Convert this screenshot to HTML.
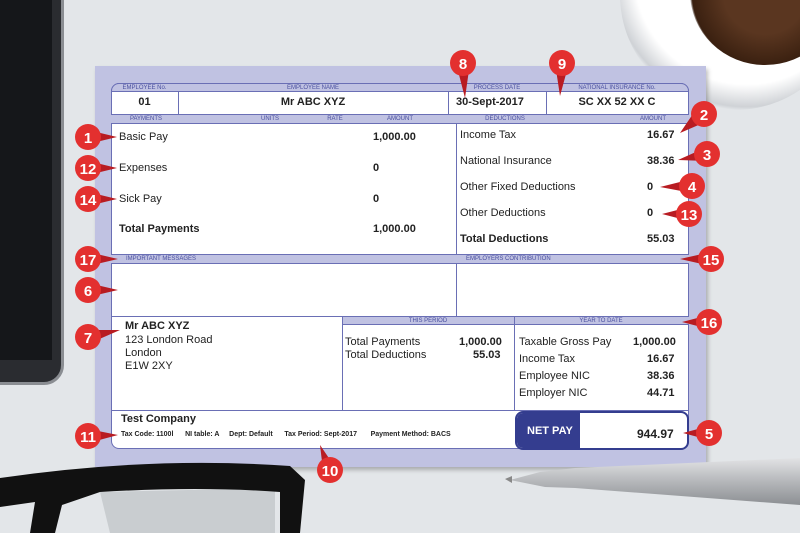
<!DOCTYPE html>
<html><head><meta charset="utf-8"><style>
*{margin:0;padding:0;box-sizing:border-box}
body{width:800px;height:533px;overflow:hidden;background:#e3e6e9;font-family:"Liberation Sans",sans-serif;position:relative}
.a{position:absolute}
.lbl{position:absolute;font-size:6px;color:#4a50a0;text-align:center;line-height:8px}
.t{position:absolute;font-size:11px;color:#222;white-space:nowrap}
.b{font-weight:bold}
.band{position:absolute;background:#c0c2e2;border-top:1px solid #6a6fb5;border-bottom:1px solid #6a6fb5}
.vl{position:absolute;width:1px;background:#6a6fb5}
</style></head><body>
<!-- phone -->
<div class="a" style="left:-30px;top:-20px;width:94px;height:405px;background:#2a2c30;border-radius:20px;border:3px solid #8a8d92"></div>
<div class="a" style="left:-30px;top:0;width:82px;height:360px;background:#15171a"></div>
<!-- coffee -->
<div class="a" style="left:620px;top:-120px;width:230px;height:230px;border-radius:50%;background:radial-gradient(circle at 55% 40%,#fff 60%,#cfd2d6 72%,#e3e6e9 74%)"></div>
<div class="a" style="left:690px;top:-80px;width:150px;height:145px;border-radius:50%;background:radial-gradient(circle,#5a3620 40%,#3a2010 70%,#d8d8d8 72%,#f5f5f5 78%)"></div>
<!-- card -->
<div class="a" style="left:95px;top:66px;width:611px;height:401px;background:#c0c2e2;box-shadow:2px 3px 4px rgba(0,0,0,.25)"></div>
<div class="a" style="left:111px;top:83px;width:578px;height:366px;background:#fff;border:1px solid #6a6fb5;border-radius:8px"></div>
<div class="band" style="left:111px;top:83px;width:578px;height:9px;border-radius:8px 8px 0 0;border-left:1px solid #6a6fb5;border-right:1px solid #6a6fb5"></div>
<div class="lbl" style="left:111px;top:84px;width:67px">EMPLOYEE No.</div>
<div class="lbl" style="left:178px;top:84px;width:270px">EMPLOYEE NAME</div>
<div class="lbl" style="left:448px;top:84px;width:98px">PROCESS DATE</div>
<div class="lbl" style="left:546px;top:84px;width:142px">NATIONAL INSURANCE No.</div>
<div class="vl" style="left:178px;top:92px;height:22px"></div>
<div class="vl" style="left:448px;top:92px;height:22px"></div>
<div class="vl" style="left:546px;top:92px;height:22px"></div>
<div class="t b" style="left:111px;top:96px;width:67px;text-align:center">01</div>
<div class="t b" style="left:178px;top:96px;width:270px;text-align:center">Mr ABC XYZ</div>
<div class="t b" style="left:456px;top:96px">30-Sept-2017</div>
<div class="t b" style="left:546px;top:96px;width:142px;text-align:center">SC XX 52 XX C</div>
<div class="band" style="left:111px;top:114px;width:578px;height:10px"></div>
<div class="lbl" style="left:116px;top:115px;width:60px">PAYMENTS</div>
<div class="lbl" style="left:250px;top:115px;width:40px">UNITS</div>
<div class="lbl" style="left:315px;top:115px;width:40px">RATE</div>
<div class="lbl" style="left:375px;top:115px;width:50px">AMOUNT</div>
<div class="lbl" style="left:470px;top:115px;width:70px">DEDUCTIONS</div>
<div class="lbl" style="left:628px;top:115px;width:50px">AMOUNT</div>
<div class="vl" style="left:456px;top:124px;height:192px"></div>
<div class="t" style="left:119px;top:131px">Basic Pay</div>
<div class="t b" style="left:373px;top:131px">1,000.00</div>
<div class="t" style="left:119px;top:162px">Expenses</div>
<div class="t b" style="left:373px;top:162px">0</div>
<div class="t" style="left:119px;top:193px">Sick Pay</div>
<div class="t b" style="left:373px;top:193px">0</div>
<div class="t b" style="left:119px;top:223px">Total Payments</div>
<div class="t b" style="left:373px;top:223px">1,000.00</div>
<div class="t" style="left:460px;top:129px">Income Tax</div>
<div class="t b" style="left:647px;top:129px">16.67</div>
<div class="t" style="left:460px;top:155px">National Insurance</div>
<div class="t b" style="left:647px;top:155px">38.36</div>
<div class="t" style="left:460px;top:181px">Other Fixed Deductions</div>
<div class="t b" style="left:647px;top:181px">0</div>
<div class="t" style="left:460px;top:207px">Other Deductions</div>
<div class="t b" style="left:647px;top:207px">0</div>
<div class="t b" style="left:460px;top:233px">Total Deductions</div>
<div class="t b" style="left:647px;top:233px">55.03</div>
<div class="band" style="left:111px;top:254px;width:578px;height:10px"></div>
<div class="lbl" style="left:126px;top:255px">IMPORTANT MESSAGES</div>
<div class="lbl" style="left:466px;top:255px">EMPLOYERS CONTRIBUTION</div>
<div class="a" style="left:111px;top:316px;width:578px;height:1px;background:#6a6fb5"></div>
<div class="band" style="left:342px;top:316px;width:347px;height:9px"></div>
<div class="lbl" style="left:342px;top:317px;width:172px">THIS PERIOD</div>
<div class="lbl" style="left:514px;top:317px;width:174px">YEAR TO DATE</div>
<div class="vl" style="left:342px;top:316px;height:94px"></div>
<div class="vl" style="left:514px;top:316px;height:94px"></div>
<div class="a" style="left:111px;top:410px;width:578px;height:1px;background:#6a6fb5"></div>
<div class="t b" style="left:125px;top:320px">Mr ABC XYZ</div>
<div class="t" style="left:125px;top:334px">123 London Road</div>
<div class="t" style="left:125px;top:347px">London</div>
<div class="t" style="left:125px;top:360px">E1W 2XY</div>
<div class="t" style="left:345px;top:336px">Total Payments</div>
<div class="t b" style="left:459px;top:336px">1,000.00</div>
<div class="t" style="left:345px;top:349px">Total Deductions</div>
<div class="t b" style="left:473px;top:349px">55.03</div>
<div class="t" style="left:519px;top:336px">Taxable Gross Pay</div>
<div class="t b" style="left:633px;top:336px">1,000.00</div>
<div class="t" style="left:519px;top:353px">Income Tax</div>
<div class="t b" style="left:647px;top:353px">16.67</div>
<div class="t" style="left:519px;top:370px">Employee NIC</div>
<div class="t b" style="left:647px;top:370px">38.36</div>
<div class="t" style="left:519px;top:387px">Employer NIC</div>
<div class="t b" style="left:647px;top:387px">44.71</div>
<div class="t b" style="left:121px;top:413px">Test Company</div>
<div class="t b" style="left:121px;top:431px;font-size:7px">Tax Code: 1100l&nbsp;&nbsp;&nbsp;&nbsp;&nbsp;&nbsp;NI table: A&nbsp;&nbsp;&nbsp;&nbsp;&nbsp;Dept: Default&nbsp;&nbsp;&nbsp;&nbsp;&nbsp;&nbsp;Tax Period: Sept-2017&nbsp;&nbsp;&nbsp;&nbsp;&nbsp;&nbsp;&nbsp;Payment Method: BACS</div>
<div class="a" style="left:515px;top:411px;width:174px;height:39px;border:2px solid #343d8f;border-radius:8px;background:#fff;overflow:hidden">
<div class="a" style="left:0;top:0;width:63px;height:37px;background:#343d8f"></div>
<div class="t b" style="left:10px;top:12px;color:#fff;font-size:11px">NET PAY</div>
<div class="t b" style="left:120px;top:14px;font-size:12px">944.97</div></div>
<!-- glasses & pen -->
<svg class="a" style="left:0;top:0" width="800" height="533">
<defs><linearGradient id="pg" x1="0" y1="0" x2="0" y2="1"><stop offset="0" stop-color="#e2e3e5"/><stop offset=".5" stop-color="#b5b7ba"/><stop offset="1" stop-color="#8c8f93"/></linearGradient></defs>
<path d="M100 492 L275 488 L275 533 L110 533Z" fill="#b8bcc0" opacity=".6"/>
<path d="M0 478 Q150 456 290 466 L305 480 L300 533 L280 533 L280 492 Q200 486 100 492 L62 505 L55 533 L30 533 L35 502 L0 507Z" fill="#111"/>
<path d="M510 480 L540 472 L575 468 L800 458 L800 505 L575 488 L545 487Z" fill="url(#pg)"/>
<path d="M505 479 L512 476 L512 483Z" fill="#888"/>
</svg>
<!-- markers -->
<svg class="a" style="left:0;top:0" width="800" height="533" font-family="Liberation Sans" font-weight="bold" font-size="15" fill="#fff" text-anchor="middle">
<g fill="#b81c22">
<polygon points="88,130 88,144 117,137"/><polygon points="88,161 88,175 117,168"/><polygon points="88,192 88,206 117,199"/>
<polygon points="88,252 88,266 118,259"/><polygon points="88,283 88,297 118,290"/><polygon points="88,330 88,344 120,330"/>
<polygon points="88,429 88,443 118,435"/><polygon points="456,63 470,63 465,98"/><polygon points="555,63 569,63 560,96"/>
<polygon points="697,108 710,120 680,133"/><polygon points="707,147 707,161 678,160"/><polygon points="692,179 692,193 660,187"/>
<polygon points="689,207 689,221 662,214"/><polygon points="711,252 711,266 680,259"/><polygon points="709,315 709,329 682,322"/>
<polygon points="709,426 709,440 683,433"/><polygon points="323,470 337,470 320,445"/>
</g>
<g fill="#e3302f">
<circle cx="88" cy="137" r="13"/><circle cx="88" cy="168" r="13"/><circle cx="88" cy="199" r="13"/>
<circle cx="88" cy="259" r="13"/><circle cx="88" cy="290" r="13"/><circle cx="88" cy="337" r="13"/>
<circle cx="88" cy="436" r="13"/><circle cx="463" cy="63" r="13"/><circle cx="562" cy="63" r="13"/>
<circle cx="704" cy="114" r="13"/><circle cx="707" cy="154" r="13"/><circle cx="692" cy="186" r="13"/>
<circle cx="689" cy="214" r="13"/><circle cx="711" cy="259" r="13"/><circle cx="709" cy="322" r="13"/>
<circle cx="709" cy="433" r="13"/><circle cx="330" cy="470" r="13"/>
</g>
<text x="88" y="143">1</text><text x="88" y="174">12</text><text x="88" y="205">14</text>
<text x="88" y="265">17</text><text x="88" y="296">6</text><text x="88" y="343">7</text>
<text x="88" y="442">11</text><text x="463" y="69">8</text><text x="562" y="69">9</text>
<text x="704" y="120">2</text><text x="707" y="160">3</text><text x="692" y="192">4</text>
<text x="689" y="220">13</text><text x="711" y="265">15</text><text x="709" y="328">16</text>
<text x="709" y="439">5</text><text x="330" y="476">10</text>
</svg>
</body></html>
